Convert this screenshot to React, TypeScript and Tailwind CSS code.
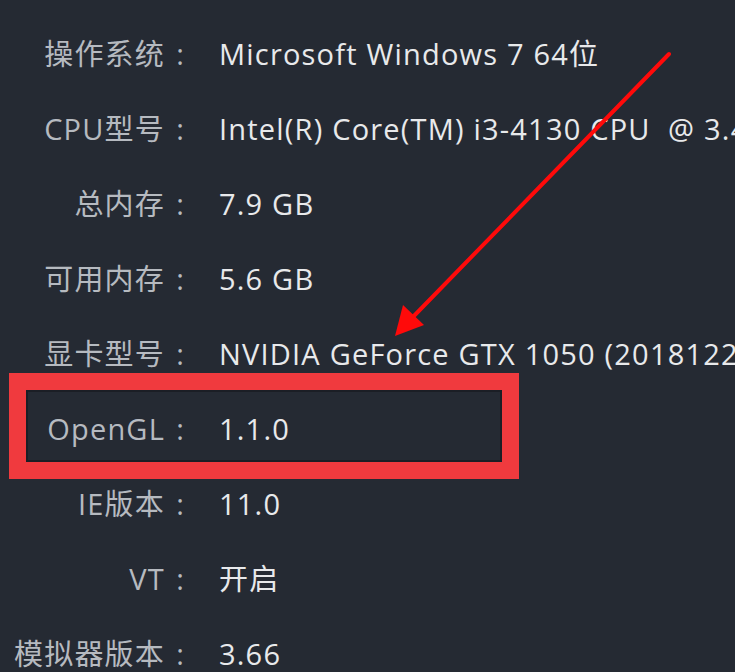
import React from "react";

const rows: [string, string][] = [
  ["操作系统", "Microsoft Windows 7 64位"],
  ["CPU型号", "Intel(R) Core(TM) i3-4130 CPU  @ 3.40GHz"],
  ["总内存", "7.9 GB"],
  ["可用内存", "5.6 GB"],
  ["显卡型号", "NVIDIA GeForce GTX 1050 (20181221)"],
  ["OpenGL", "1.1.0"],
  ["IE版本", "11.0"],
  ["VT", "开启"],
  ["模拟器版本", "3.66"],
];

export default function App() {
  return (
    <div
      className="relative w-[735px] h-[672px] overflow-hidden bg-[#252a33]"
      style={{ fontFamily: '"Open Sans", "Noto Sans CJK SC", sans-serif' }}
    >
      <div className="grid grid-cols-[195px_1fr] gap-x-[24px] pt-[16px] text-[29px] leading-none tracking-[1.2px]">
        {rows.map(([label, value]) => (
          <React.Fragment key={label}>
            <div className="h-[75px] flex items-center justify-end whitespace-nowrap text-[#b6bac0]">
              <span>{label}</span>
              <span className="w-[30px] text-center tracking-normal">:</span>
            </div>
            <div className="h-[75px] flex items-center whitespace-pre overflow-hidden text-[#e8e9eb]">
              {value}
            </div>
          </React.Fragment>
        ))}
      </div>

      {/* red highlight box */}
      <div className="absolute left-[9px] top-[373px] w-[510px] h-[106px] border-[17px] border-[#f03a3e] shadow-[inset_0_0_0_2px_#1b1e25]" />

      {/* arrow */}
      <svg
        className="absolute left-0 top-0"
        width="735"
        height="672"
        viewBox="0 0 735 672"
      >
        <line x1="669" y1="54" x2="410" y2="320" stroke="#ff0a0a" strokeWidth="4" strokeLinecap="round" />
        <polygon points="395,336 403,305 424,325" fill="#ff0a0a" />
      </svg>
    </div>
  );
}
